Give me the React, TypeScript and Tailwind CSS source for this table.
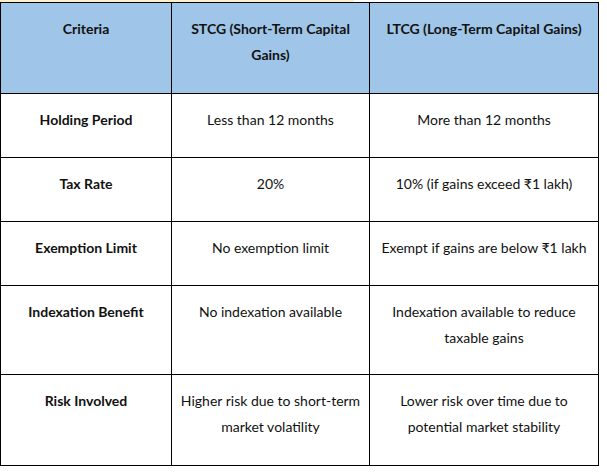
const rows: { label: string; stcg: string; ltcg: string; h: string }[] = [
  { label: "Holding Period", stcg: "Less than 12 months", ltcg: "More than 12 months", h: "h-[64px]" },
  { label: "Tax Rate", stcg: "20%", ltcg: "10% (if gains exceed ₹1 lakh)", h: "h-[64px]" },
  { label: "Exemption Limit", stcg: "No exemption limit", ltcg: "Exempt if gains are below ₹1 lakh", h: "h-[64px]" },
  {
    label: "Indexation Benefit",
    stcg: "No indexation available",
    ltcg: "Indexation available to reduce taxable gains",
    h: "h-[89px]",
  },
  {
    label: "Risk Involved",
    stcg: "Higher risk due to short\u2011term market volatility",
    ltcg: "Lower risk over time due to potential market stability",
    h: "h-[91px]",
  },
];

export default function App() {
  return (
    <div className="h-[473px] w-[607px] bg-white font-['Lato','Noto_Sans',sans-serif] text-[14px] leading-[26px] text-[#111]">
      <div className="h-[2px] w-[354px] bg-[#fdf1cb]" />
      <table className="w-[598px] table-fixed border-collapse">
        <colgroup>
          <col className="w-[171px]" />
          <col className="w-[198px]" />
          <col className="w-[229px]" />
        </colgroup>
        <thead>
          <tr className="h-[91px] bg-[#9fc5e8]">
            <th className="border border-black px-2 pt-[13px] align-top font-bold">Criteria</th>
            <th className="border border-black px-2 pt-[13px] align-top font-bold">
              STCG (Short-Term Capital Gains)
            </th>
            <th className="border border-black px-2 pt-[13px] align-top font-bold">
              LTCG (Long-Term Capital Gains)
            </th>
          </tr>
        </thead>
        <tbody>
          {rows.map((r) => (
            <tr key={r.label} className={r.h}>
              <td className="border border-black px-2 pt-[13px] text-center align-top font-bold">{r.label}</td>
              <td className="border border-black px-2 pt-[13px] text-center align-top">{r.stcg}</td>
              <td className="border border-black px-1 pt-[13px] text-center align-top">{r.ltcg}</td>
            </tr>
          ))}
        </tbody>
      </table>
    </div>
  );
}
